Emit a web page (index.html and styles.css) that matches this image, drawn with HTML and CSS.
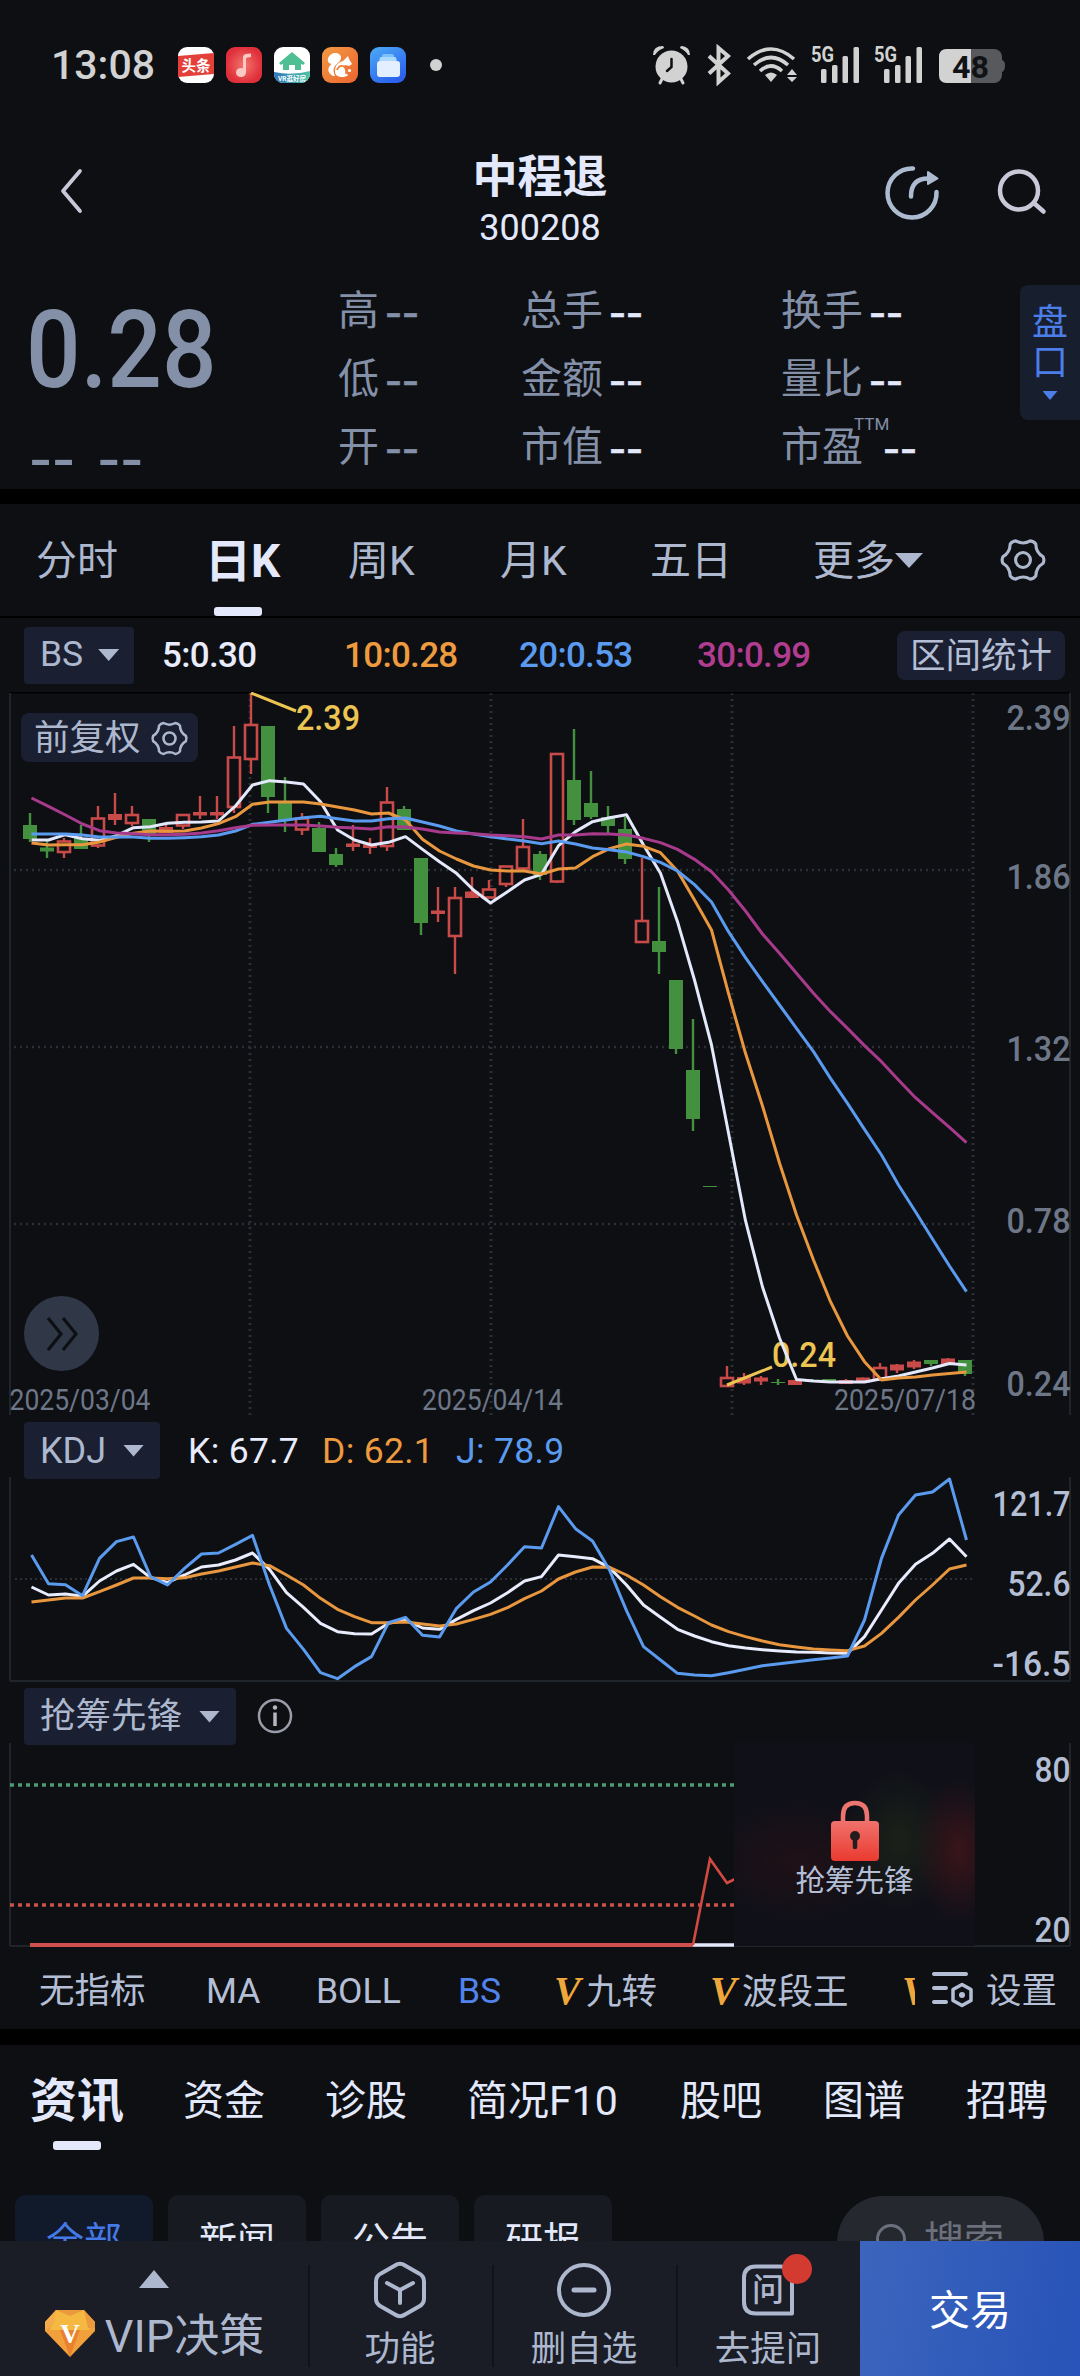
FILE: index.html
```html
<!DOCTYPE html>
<html lang="zh-CN">
<head>
<meta charset="utf-8">
<title>中程退 300208</title>
<link rel="stylesheet" href="styles.css">
</head>
<body>
<svg class="defs" width="0" height="0">
  <symbol id="gear" viewBox="-20 -20 40 40"><path d="M16.8-2.7Q18 0 16.8 2.7Q10.8 6.3 10.7 13.2Q9 15.6 6.1 15.9Q0 12.5-6.1 15.9Q-9 15.6-10.7 13.2Q-10.8 6.3-16.8 2.7Q-18 0-16.8-2.7Q-10.8-6.3-10.7-13.2Q-9-15.6-6.1-15.9Q0-12.5 6.1-15.9Q9-15.6 10.7-13.2Q10.8-6.3 16.8-2.7Z"/><circle r="6.2"/></symbol>
  <symbol id="bars" viewBox="0 0 50 40"><rect x="11" y="23" width="5.5" height="14" rx="1.5"/><rect x="22" y="19" width="5.5" height="18" rx="1.5"/><rect x="32.500" y="10" width="5.500" height="27" rx="1.500"/><rect x="43.500" y="1" width="5.500" height="36" rx="1.500"/></symbol>
</svg>
<div class="page">
  <div class="status">
    <span class="clock">13:08</span>
    <div class="apps">
      <svg width="36" height="36" viewBox="0 0 36 36"><rect width="36" height="36" rx="9" fill="#fff"/><path d="M0 9L36 6V27L0 30Z" fill="#e4403a"/><text x="18" y="23.500" text-anchor="middle" font-size="14.500" class="badge-text">头条</text></svg>
      <svg width="36" height="36" viewBox="0 0 36 36"><defs><radialGradient id="ga"><stop offset="0" stop-color="#f4756c"/><stop offset="1" stop-color="#df2f3b"/></radialGradient></defs><rect width="36" height="36" rx="9" fill="url(#ga)"/><ellipse cx="15" cy="25.500" rx="5" ry="4.500" fill="#fbc9c3"/><path d="M17 26V9.500Q17.500 7 20 7L25 6.500V10L20 11V26Z" fill="#fbc9c3"/></svg>
      <svg width="36" height="36" viewBox="0 0 36 36"><defs><clipPath id="ca"><rect width="36" height="36" rx="9"/></clipPath><linearGradient id="gb"><stop offset="0" stop-color="#3078bd"/><stop offset="1" stop-color="#4ec3a4"/></linearGradient></defs><g clip-path="url(#ca)"><rect width="36" height="36" fill="#fff"/><path d="M18 5L31 16L29 18L27 16.500V23H21V18H15V23H9V16.500L7 18L5 16Z" fill="#4dbf92"/><path d="M0 25Q18 29 36 24V36H0Z" fill="url(#gb)"/><text x="18" y="33.500" text-anchor="middle" font-size="6.500" class="badge-text">VR逛好房</text></g></svg>
      <svg width="36" height="36" viewBox="0 0 36 36"><defs><linearGradient id="gc" x2="1" y2="1"><stop offset="0" stop-color="#f29a43"/><stop offset="1" stop-color="#ec6430"/></linearGradient></defs><rect width="36" height="36" rx="9" fill="url(#gc)"/><path d="M11 29C4 25 6 20 9.500 17C3.500 16 5 8 12 6C19 5 21 11 17 15C12 19 10 22 13 29Z" fill="#fff"/><path d="M13 24C13 17 18 15 21 14L26 9L27 12L30 17L27 19L23 18C21 18 23 22 26 28.500L22 30C15 30 13 28 13 24Z" fill="#fff"/><path d="M15 23Q17 18 21 19Q25 21 24 27" fill="none" stroke="#ee7d38" stroke-width="1.800"/><circle cx="27.500" cy="23.500" r="1.600" fill="#fff"/></svg>
      <svg width="36" height="36" viewBox="0 0 36 36"><defs><linearGradient id="gd" x2=".6" y2="1"><stop offset="0" stop-color="#4dabf5"/><stop offset="1" stop-color="#2c62ee"/></linearGradient></defs><rect width="36" height="36" rx="9" fill="url(#gd)"/><rect x="12" y="7" width="12" height="5" rx="2" fill="#78c1fa"/><rect x="9.500" y="10" width="17" height="6" rx="2" fill="#abd8fd"/><rect x="7" y="14" width="23" height="16" rx="3" fill="#e3efff"/></svg>
    </div>
    <i class="dot"></i>
    <svg class="sys" width="356" height="42" viewBox="650 44 356 42">
      <g fill="#d2d2d2" stroke="#d2d2d2" stroke-linecap="round">
        <circle cx="671.500" cy="66.500" r="16" stroke="none"/><path d="M653 55Q653 46 663 46Q664 47 664 48Q658 50 655 55ZM680 48Q680 46 682 46Q690 47 690 55H688Q686 51 680 48Z" stroke="none"/><path d="M662 79L660 83M681 79L683 83" stroke-width="3"/>
        <path d="M671.500 59V67L667 71" stroke="#0d0f13" stroke-width="2.500" fill="none"/>
        <path d="M709 56L728 73.500L718.500 82V48L728 56L709 73.500" fill="none" stroke-width="4" stroke-linecap="butt"/>
        <path d="M748 59Q771 39 794 59M754 65Q771 50 788 65M760 71Q771 61 782 71" fill="none" stroke-width="3.600" stroke-linecap="butt"/><path d="M765 75Q771 70 777 75L771 82Z" stroke="none"/>
        <path d="M792 69L797 75H787ZM792 82L797 77H787Z" stroke="none"/>
      </g>
      <use href="#bars" x="810" y="46" width="50" height="40" fill="#d2d2d2"/><use href="#bars" x="873" y="46" width="50" height="40" fill="#d2d2d2"/>
      <text x="811" y="61.500" class="net" textLength="23" lengthAdjust="spacingAndGlyphs">5G</text><text x="874" y="61.500" class="net" textLength="23" lengthAdjust="spacingAndGlyphs">5G</text>
      <path d="M1000 60H1002Q1005 61 1005 65Q1005 71 1002 72H1000Z" fill="#58595c"/><rect x="939" y="49" width="63" height="34" rx="8" fill="#58595c"/><path d="M971 49H947Q939 49 939 57V75Q939 83 947 83H971Z" fill="#d2d2d2"/><text x="952" y="77.500" class="batt" textLength="37" lengthAdjust="spacingAndGlyphs">48</text>
    </svg>
  </div>

  <div class="titlebar">
    <svg class="back" width="24" height="46" viewBox="0 0 24 46"><path d="M21 3L4 23L21 43" fill="none" stroke="#c9c7d8" stroke-width="3.800" stroke-linecap="round" stroke-linejoin="round"/></svg>
    <div class="stock"><b>中程退</b><span>300208</span></div>
    <div class="tools">
      <svg width="60" height="60" viewBox="-30 -30 60 60"><g fill="none" stroke="#adbbd1" stroke-width="4.500" stroke-linecap="round"><path d="M1-24.500A24.500 24.500 0 1 0 24.500-1"/><path d="M-1 3.500C-1-9 5-14.500 16-14.500"/></g><path d="M16-21L25.500-14.500L16-9Z" fill="#adbbd1" stroke="#adbbd1" stroke-width="2" stroke-linejoin="round"/></svg>
      <svg width="60" height="60" viewBox="-30 -30 60 60"><g fill="none" stroke="#c9c7d8" stroke-width="4.500" stroke-linecap="round"><circle cx="-1" cy="-2.500" r="19"/><path d="M15 11L23.500 18.500"/></g></svg>
    </div>
  </div>

  <div class="quote">
    <div class="price"><span class="last">0.28</span><span class="change"><i>--</i><i>--</i></span></div>
    <dl class="facts">
      <div class="dim"><dt>高</dt><dd>--</dd></div><div><dt>总手</dt><dd>--</dd></div><div><dt>换手</dt><dd>--</dd></div>
      <div class="dim"><dt>低</dt><dd>--</dd></div><div><dt>金额</dt><dd>--</dd></div><div><dt>量比</dt><dd>--</dd></div>
      <div class="dim"><dt>开</dt><dd>--</dd></div><div><dt>市值</dt><dd>--</dd></div><div><dt class="ttm">市盈<sup>TTM</sup></dt><dd>--</dd></div>
    </dl>
    <div class="side"><span>盘</span><span>口</span><i class="tri"></i></div>
  </div>

  <div class="band"></div>

  <nav class="period">
    <span>分时</span><span class="on">日K</span><span>周K</span><span>月K</span><span>五日</span><span>更多<i class="tri"></i></span>
    <svg width="48" height="48"><use href="#gear"/></svg>
  </nav>

  <div class="legend">
    <span class="pill">BS<i class="tri"></i></span>
    <span class="ma c5">5:0.30</span><span class="ma c10">10:0.28</span><span class="ma c20">20:0.53</span><span class="ma c30">30:0.99</span>
    <span class="range">区间统计</span>
  </div>

  <div class="chart main">
    <svg id="kline" width="1080" height="723" viewBox="0 692 1080 723"></svg>
    <span class="adjust">前复权<svg width="39" height="39"><use href="#gear"/></svg></span>
    <span class="expand"><svg width="36" height="36" viewBox="0 0 36 36"><path d="M4 2L17 18L4 34M19 2L32 18L19 34" fill="none" stroke="#0d0f13" stroke-width="3.200"/></svg></span>
  </div>

  <div class="subhead"><span class="pill">KDJ<i class="tri"></i></span><span class="k c5">K: 67.7</span><span class="k c10">D: 62.1</span><span class="k c20">J: 78.9</span></div>
  <div class="chart"><svg id="kdj" width="1080" height="205" viewBox="0 1477 1080 205"></svg></div>

  <div class="subhead second"><span class="pill">抢筹先锋<i class="tri"></i></span>
    <svg class="info" width="38" height="38" viewBox="-19 -19 38 38"><circle r="16" fill="none" stroke="#9a9ca8" stroke-width="2.500"/><circle cy="-8.500" r="2.200" fill="#b4b6c2"/><path d="M0-3.500V10" stroke="#b4b6c2" stroke-width="3.500"/></svg>
  </div>
  <div class="chart third">
    <svg id="chips" width="1080" height="204" viewBox="0 1743 1080 204"></svg>
    <div class="lock">
      <svg width="50" height="62" viewBox="0 0 50 62"><defs><linearGradient id="gl" x2="0" y2="1"><stop offset="0" stop-color="#f0726c"/><stop offset="1" stop-color="#ea3a30"/></linearGradient></defs><path d="M13 24V16Q13 3 25 3Q37 3 37 16V24" fill="none" stroke="#ed746f" stroke-width="4.500"/><rect x="1" y="21" width="48" height="40" rx="4" fill="url(#gl)"/><circle cx="25" cy="36" r="5" fill="#241d20"/><path d="M25 37V47" stroke="#241d20" stroke-width="4.500" stroke-linecap="round"/></svg>
      <span>抢筹先锋</span>
    </div>
  </div>

  <div class="indicators">
    <span>无指标</span><span>MA</span><span>BOLL</span><span class="on">BS</span><span><b>V</b>九转</span><span><b>V</b>波段王</span><span class="cut"><b>V</b></span>
    <svg width="44" height="42" viewBox="0 0 44 42"><g fill="none" stroke="#b4bfd6" stroke-width="4" stroke-linecap="round"><path d="M3 4H35M3 18H15M3 32H15"/><path stroke-width="3.500" d="M31 14.500L40 19.500V30.500L31 35.500L22 30.500V19.500Z" stroke-linejoin="round"/></g><circle cx="31" cy="25" r="3" fill="#b4bfd6"/></svg>
    <span>设置</span>
  </div>

  <div class="band last-band"></div>

  <nav class="news"><span class="on">资讯</span><span>资金</span><span>诊股</span><span>简况F10</span><span>股吧</span><span>图谱</span><span>招聘</span></nav>

  <div class="filters">
    <span class="chip on">全部</span><span class="chip">新闻</span><span class="chip">公告</span><span class="chip">研报</span>
    <span class="search"><svg width="34" height="38" viewBox="0 0 34 38"><circle cx="16" cy="16" r="13.500" fill="none" stroke="#6a707c" stroke-width="3"/><path d="M25 26L32 34" stroke="#6a707c" stroke-width="3"/></svg>搜索</span>
  </div>

  <div class="bottom">
    <div class="vip">
      <i class="up"></i>
      <div><svg width="52" height="48" viewBox="0 0 52 48"><path d="M12 0H40L51 12V21L26 47L1 21V12Z" fill="#f2a03c"/><path d="M12 0H40L46 20H6Z" fill="#f5b942"/><path d="M12 0L26 6L40 0L44 18H51V12L40 0Z" fill="#ea9a3c"/><path d="M12 0L1 12V20L10 14Z" fill="#f4ac4a"/><path d="M16 20L26 47L36 20Z" fill="#e8822f"/><text x="26" y="33" text-anchor="middle" class="gem">V</text></svg><span>VIP决策</span></div>
    </div>
    <div class="act"><svg width="60" height="60" viewBox="-30 -30 60 60"><path d="M-5-24.500Q0-28 5-24.500L19-16.500Q24-14 24-8.500V8.500Q24 14 19 16.500L5 24.500Q0 28-5 24.500L-19 16.500Q-24 14-24 8.500V-8.500Q-24-14-19-16.500Z"/><path d="M-13-7L0 0L13-7M0 0V13"/></svg><span>功能</span></div>
    <div class="act"><svg width="60" height="60" viewBox="-30 -30 60 60"><circle r="25"/><path d="M-10 0H10" stroke-width="5"/></svg><span>删自选</span></div>
    <div class="act ask"><svg width="60" height="60" viewBox="-30 -30 60 60"><path d="M24 23.500H-12Q-24 23.500-24 12V-12Q-24-23.500-12-23.500H12Q24-23.500 24-12Z"/><text y="11" text-anchor="middle">问</text></svg><i class="red"></i><span>去提问</span></div>
    <div class="trade">交易</div>
  </div>
</div>
<script src="charts.js"></script>
</body>
</html>
```
FILE: styles.css
```css
* { box-sizing: border-box; }
body { margin: 0; background: #0d0f13; font-family: Roboto, "Noto Sans CJK SC", sans-serif; line-height: 1; color: #adb8cf; }
i { font-style: normal; }
svg { display: block; flex: none; }
.defs { position: absolute; }
span { white-space: nowrap; }
.page { width: 1080px; height: 2376px; overflow: hidden; display: flex; flex-direction: column; }
.page > * { flex: none; }
.badge-text { font-weight: 700; fill: #fff; }
.tri { display: inline-block; width: 21px; height: 12px; background: currentColor; clip-path: polygon(0 0, 100% 0, 50% 100%); }

/* status bar */
.status { height: 100px; padding: 30px 0 0 51px; display: flex; align-items: center; }
.clock { width: 127px; font-size: 41px; font-weight: 500; color: #d2d2d2; }
.apps { display: flex; gap: 12px; }
.dot { width: 12px; height: 12px; border-radius: 50%; background: #d2d2d2; margin-left: 24px; }
.sys { margin-left: 208px; }
.net { font-size: 22px; font-weight: 700; fill: #d2d2d2; }
.batt { font-size: 32px; font-weight: 700; fill: #101216; }

/* title */
.titlebar { height: 160px; display: grid; grid-template-columns: 300px 1fr 300px; }
.back { margin: 68px 0 0 59px; }
.stock { display: flex; flex-direction: column; align-items: center; color: #e3e8fb; padding-top: 55px; }
.stock b { font-size: 45px; height: 55px; }
.stock span { font-size: 36px; }
.tools { display: flex; gap: 48px; padding: 63px 0 0 102px; }

/* quote */
.quote { height: 229px; display: grid; grid-template-columns: 338px 682px 60px; color: #8390a8; }
.price { padding: 36px 0 0 26px; display: flex; flex-direction: column; }
.last { font-size: 108px; font-weight: 500; transform: scaleX(.89); transform-origin: 0 0; height: 130px; }
.change { display: flex; gap: 22px; padding-left: 3px; font: 64px/1 "DejaVu Sans"; }
.facts { margin: 0; display: grid; grid-template-columns: 183px 260px 239px; grid-auto-rows: 68px; padding-top: 17px; }
.facts div { display: flex; align-items: center; }
.facts dt { font-size: 41px; }
.facts dd { margin: 0 0 0 6px; font: 47px/1 "DejaVu Sans"; color: #e3e8fb; -webkit-text-stroke: .5px currentColor; }
.facts .dim dd { color: #8390a8; }
.ttm { position: relative; margin-right: 14px; }
.ttm sup { position: absolute; left: 73px; top: -11px; font-size: 17px; line-height: 1; }
.side { margin-top: 25px; height: 135px; background: #171e2e; border-radius: 8px 0 0 8px; color: #4c7ee9; display: flex; flex-direction: column; align-items: center; padding: 20px 0 0 0; font-size: 36px; gap: 4px; }
.side .tri { width: 15px; height: 9px; margin-top: 6px; }

.band { height: 15px; background: #000; }
.last-band { height: 16px; }

/* period tabs */
.period { height: 114px; border-bottom: 2px solid #000; display: grid; grid-template-columns: 169px 143px 152px 150px 163px 186px 48px; padding: 0 0 0 36px; align-items: center; font-size: 41px; }
.period span { height: 112px; line-height: 114px; }
.period .on { position: relative; font-size: 46px; font-weight: 700; color: #e3e8fb; }
.period .on::after { content: ""; position: absolute; left: 9px; bottom: 0; width: 48px; height: 9px; background: #e3e8fb; border-radius: 3px; }
.period .tri { width: 28px; height: 15px; margin-bottom: 7px; }
.period svg, .adjust svg { fill: none; stroke: #adb8cf; stroke-width: 2.600; }

/* moving-average legend */
.legend { height: 74px; display: grid; grid-template-columns: 138px 182px 175px 178px 200px 168px; padding-left: 24px; align-items: center; }
.pill { justify-self: start; height: 57px; padding: 0 15px 0 16px; background: #1a2031; border-radius: 4px; display: flex; align-items: center; gap: 15px; font-size: 35.500px; }
.subhead .pill { font-size: 36px; gap: 17px; padding-right: 16px; }
.subhead.second .pill { font-size: 35.500px; }
.ma { font-size: 35px; letter-spacing: -.7px; font-weight: 500; }
.c5 { color: #e8ecfc; } .c10 { color: #ee9a3f; } .c20 { color: #5a9bef; } .c30 { color: #b13c90; }
.range { height: 49px; line-height: 50px; border-radius: 8px; background: #1a2031; font-size: 35.500px; text-align: center; color: #b4bfd6; }

/* charts */
.chart { position: relative; }
.chart svg text { font-size: 35px; fill: #b4bfd6; }
.adjust { position: absolute; left: 21px; top: 21px; width: 177px; height: 49px; padding: 2px 0 0 13px; border-radius: 8px; background: #1a2031; display: flex; align-items: center; gap: 9px; font-size: 35.500px; }
.expand { position: absolute; left: 24px; top: 604px; width: 75px; height: 75px; border-radius: 50%; background: #303848; display: grid; place-items: center; }
.subhead { height: 62px; padding: 7px 0 0 24px; display: flex; align-items: flex-start; position: relative; z-index: 1; }
.subhead.second { height: 61px; padding-top: 6px; }
.subhead .k { font-size: 35.500px; line-height: 58px; width: 134px; letter-spacing: .3px; }
.subhead .pill + .k { margin-left: 28px; }
.info { margin: 9px 0 0 20px; }
.lock { position: absolute; left: 734px; top: 0; width: 241px; height: 203px; background: radial-gradient(ellipse 44px 75px at 225px 108px, #39151a, transparent), radial-gradient(ellipse 55px 75px at 165px 98px, #1b2119, transparent), radial-gradient(ellipse 100px 65px at 65px 118px, #201117, transparent), #0f1018; display: flex; flex-direction: column; align-items: center; padding-top: 57px; gap: 5px; font-size: 29.500px; color: #b4bfd6; }

/* indicator switcher */
.indicators { height: 82px; display: grid; grid-template-columns: 167px 110px 142px 96px 156px 192px 29px 55px 1fr; padding: 7px 0 0 39px; align-items: center; font-size: 35.500px; color: #b4bfd6; }
.indicators .on { color: #5283ec; }
.indicators b { display: inline-block; width: 32px; font: italic 700 40px/35px "Liberation Serif"; color: #efa73c; }
.indicators .cut { width: 13px; overflow: hidden; }
.indicators svg { align-self: start; margin: 16px 0 0; }

/* news tabs */
.news { height: 150px; display: grid; grid-template-columns: 153px 142px 142px 213px 143px 143px 1fr; padding-left: 30px; align-items: start; font-size: 41px; color: #e3e8fb; }
.news span { line-height: 41px; margin-top: 36px; }
.news .on { position: relative; font-size: 47px; font-weight: 700; height: 80px; margin-top: 35px; }
.news .on::after { content: ""; position: absolute; left: 23px; bottom: 10px; width: 48px; height: 9px; background: #e3e8fb; border-radius: 3px; }
.filters { height: 46px; overflow: hidden; padding-left: 15px; display: flex; gap: 15px; font-size: 38px; color: #e3e8fb; }
.chip { width: 138px; height: 92px; line-height: 92px; border-radius: 10px; text-align: center; background: #171a21; }
.chip.on { background: #111a2b; color: #4679e8; }
.search { margin: 1px 36px 0 auto; width: 207px; height: 92px; border-radius: 46px; background: #25282f; color: #6a707c; font-size: 40px; display: flex; align-items: center; padding-left: 38px; gap: 15px; }

/* bottom bar */
.bottom { height: 135px; background: #1a1d26; display: grid; grid-template-columns: 308px 184px 184px 184px 220px; color: #adb8cf; }
.vip { display: flex; flex-direction: column; align-items: center; padding-top: 29px; gap: 22px; }
.vip .up { width: 30px; height: 18px; background: currentColor; clip-path: polygon(50% 0, 100% 100%, 0 100%); }
.vip div { display: flex; gap: 9px; font-size: 45px; }
.vip span { padding-top: 4px; }
.gem { font: 700 27px "Liberation Serif"; fill: #fff; }
.act { position: relative; display: flex; flex-direction: column; align-items: center; padding-top: 19px; gap: 12px; font-size: 35.500px; }
.act::before { content: ""; position: absolute; left: 0; top: 24px; width: 2px; height: 102px; background: #101319; }
.act svg { fill: none; stroke: currentColor; stroke-width: 4; stroke-linecap: round; stroke-linejoin: round; }
.act text { font-size: 32px; font-weight: 500; fill: currentColor; stroke: none; }
.ask .red { position: absolute; left: 106px; top: 13px; width: 30px; height: 30px; border-radius: 50%; background: #d43b30; }
.trade { background: linear-gradient(100deg, #3c65bd, #2853b8); color: #fff; font-size: 41px; padding-top: 5px; display: grid; place-items: center; }
```
FILE: charts.js
```js
const BG = '#0d0f13', RED = '#c94b49', GREEN = '#43913f';
const GRID = '#2b2e34', FRAME = '#20252b';
const cx = i => 30 + 17 * i;
const line = (x1, y1, x2, y2, c, w = 2, dash = '') =>
  `<line x1="${x1}" y1="${y1}" x2="${x2}" y2="${y2}" stroke="${c}" stroke-width="${w}" stroke-dasharray="${dash}"/>`;
const rect = (x, y, w, h, fill, extra = '') =>
  `<rect x="${x}" y="${y}" width="${w}" height="${h}" fill="${fill}" ${extra}/>`;
const series = (ys, c) =>
  `<polyline points="${ys.map((y, i) => `${cx(i) + 1.5},${y}`).join(' ')}" fill="none" stroke="${c}" stroke-width="3" stroke-linejoin="round"/>`;
const label = (x, y, s, w, fill = '#6e7788', size = 35, weight = 500) =>
  `<text x="${x - w}" y="${y}" textLength="${w}" lengthAdjust="spacingAndGlyphs" style="fill:${fill};font-size:${size}px;font-weight:${weight}">${s}</text>`;

// type (g = down, r = hollow up, f = flat up), high, body top, body bottom, low
const candles = [
  ['g',813,825,839,842],['g',840,847.5,851.5,858],['r',838,841,852.5,858],['g',825,838,849,849],['r',806,818,846,848],
  ['f',793,814,820,825],['r',806,814.5,823.5,826],['g',819,819,834,842],['f',824,827,833,833],['r',814.5,814.5,826,829],
  ['f',796,812,815.5,819],['f',796,812,815.5,819],['r',726,757,807.5,813],['r',693,724.5,759.5,774],['g',726,726,797,813],
  ['g',777,803,820,832],['r',813,818,830,835],['g',822,828,852,852],['g',848,854,865,867],['f',825,843.5,847,851],
  ['f',838,844.5,848,854],['r',787,802,846.5,851],['g',806,809,830,830],['g',858,858,923,935],['f',887,910.5,914,922],
  ['r',887,897.5,936.5,974],['f',877,891.5,898,898],['r',880,889,898,898],['r',866,866,884.5,887],['r',819,846.5,869,870],
  ['g',851,854,875,880],['r',753,753.500,882,883],['g',729,780,820,825],['g',771,803,817,819],['g',806,817,826,833],
  ['g',817,829,859,864],['r',858,920.5,942.5,942.5],['g',887,941,952,974],['g',980,980,1049,1054],['g',1019,1070,1119,1131],
  ['g',1186,1186,1187,1187],['r',1366,1377.5,1386.5,1386.5],['f',1373,1377,1383.5,1385],['f',1376,1377.5,1381.5,1385],
  ['g',1379,1382,1383,1385],['f',1380,1380,1385,1385],['g',1379,1380,1382,1382],['g',1379,1379,1382,1382],
  ['f',1379,1380,1384,1384],['f',1377.5,1377.5,1382.5,1382.5],['r',1363,1367.5,1380,1380],['f',1364,1364.5,1370.5,1373],
  ['f',1360,1361.5,1367.5,1369],['g',1360,1360,1364,1366],['f',1358,1358.5,1365,1365],['g',1360,1360,1374,1376]
];
const from680 = a => a.map(v => 680 + v / 3);
const ma5 = from680([480,480,464,476,481,467,443,440,430,427,426,423,378,315,302,306,312,365,450,480,495,487,470,508,545,580,630,669,635,600,583,497,455,425,413,404,495,580,725,900,1095])
  .concat([1133,1220.7,1287,1338,1379.5,1381,1382,1382,1382,1378.7,1376,1372,1368,1363.5,1365]);
const ma10 = from680([489,495,494,494,486,472,460,453,454,453,444,431,410,373,366,366,366,372,381,390,402,399,420,478,513,537,558,570,573,573,582,567,564,530,506,492,499,518,573,660,750,940,1120,1278])
  .concat([1163,1215,1260,1301.7,1336,1361.7,1380,1378,1377,1375,1373.5,1372]);
const ma20 = from680([462,462,462,465,471,471,471,475,475,473,470,465,453,433,427,420,413,409,416,423,423,416,414,426,438,453,462,470,477,483,491,483,492,504,509,516,530,547,573,614,666,755,833,905,975,1045,1115,1195,1270,1348])
  .concat([1155,1185,1211.7,1239,1266,1291.7]);
const ma30 = from680([354,379,405,432,452,459,461,464,464,463,459,452,443,436,435,435,435,438,442,444,447,440,441,447,456,459,461,465,467,470,477,465,465,461,462,465,475,488,508,538,575,630,693,762,820,880,940,995,1045,1097,1145,1200,1253,1298,1342,1388]);

let k = '';
[250, 491, 732, 973].forEach(x => k += line(x, 693, x, 1415, GRID, 3, '2 4'));
[870, 1047, 1224].forEach(y => k += line(14, y, 973, y, GRID, 2.5, '2 4'));
k += line(9, 692, 1070, 692, '#000', 3) + line(10, 693, 10, 1415, FRAME) + line(1070, 693, 1070, 1415, FRAME);
candles.forEach(([t, hi, top, bot, lo], i) => {
  const x = cx(i), c = t === 'g' ? GREEN : RED;
  k += line(x, hi, x, lo, c, 2.4);
  k += t === 'r'
    ? rect(x - 6, top + 0.5, 12, bot - top - 1, BG, `stroke="${c}" stroke-width="2.6"`)
    : rect(x - 7, top, 14, bot - top, c);
});
k += label(150.5, 1410, '2025/03/04', 141, undefined, 29, 400) + label(563, 1410, '2025/04/14', 141, undefined, 29, 400) + label(976, 1410, '2025/07/18', 142, undefined, 29, 400);
k += line(251, 693, 296, 711, '#ecc452', 3) + line(727, 1385, 772, 1367, '#ecc452', 3);
k += label(360, 730, '2.39', 64, '#ecc452') + label(836, 1367, '0.24', 64, '#ecc452');
k += series(ma5, '#e3e8fb') + series(ma10, '#e8973e') + series(ma20, '#5a9bef') + series(ma30, '#a83a8c');
[['2.39', 730], ['1.86', 889], ['1.32', 1061], ['0.78', 1233], ['0.24', 1396]].forEach(([s, y]) => k += label(1070.5, y, s, 64));
document.getElementById('kline').innerHTML = k;

const from1280 = a => a.map(v => 1280 + v / 3);
const J = from1280([825,911,914,947,835,785,771,890,915,865,822,819,793,766,915,1045,1108,1178,1196,1160,1130,1028,1012,1066,1071,985,936,906,855,800,804,680,746,783,870,992,1100,1140,1180,1185,1187,1178,1168,1157,1151,1145,1139,1134,1128,1020,835,705,645,636,597,780]);
const K = from1280([921,945,942,949,903,873,853,893,907,885,861,855,840,819,868,938,982,1030,1055,1061,1062,1030,1020,1044,1048,1018,992,969,938,903,890,825,830,836,863,915,975,1012,1048,1068,1085,1097,1104,1109,1113,1116,1117,1119,1120,1070,990,910,853,820,777,830]);
const D = from1280([966,960,954,954,935,915,894,894,896,893,882,873,861,849,857,885,915,955,988,1010,1028,1028,1026,1032,1038,1032,1018,1003,983,956,933,897,876,861,862,885,915,950,982,1008,1035,1055,1070,1083,1094,1101,1107,1110,1112,1098,1060,1012,960,915,867,855]);
let d = line(10, 1477, 10, 1681, FRAME) + line(1070, 1477, 1070, 1681, FRAME) + line(10, 1681, 1070, 1681, FRAME);
d += line(15, 1579, 973, 1579, GRID, 2, '2 3');
d += series(K, '#e8ecfc') + series(D, '#e8973e') + series(J, '#5a9bef');
d += label(1070.5, 1516, '121.7', 78, '#b4bfd6') + label(1070.5, 1596, '52.6', 63, '#b4bfd6') + label(1070.5, 1676, '-16.5', 78, '#b4bfd6');
document.getElementById('kdj').innerHTML = d;

let c = line(10, 1743, 10, 1946, FRAME) + line(1070, 1743, 1070, 1946, FRAME) + line(10, 1946, 1070, 1946, FRAME);
c += line(10, 1785, 734, 1785, '#4b9c74', 3.5, '4 4') + line(10, 1905, 734, 1905, '#cc514c', 3.5, '4 4');
c += line(30, 1945, 693, 1945, '#cf504c', 4) + line(693, 1945, 734, 1945, '#e3e8fb', 3.5);
c += '<polyline points="693,1945 710,1859 727,1883 735,1879" fill="none" stroke="#d04a42" stroke-width="2.6"/>';
c += label(1070.5, 1782, '80', 36, '#b4bfd6') + label(1070.5, 1942, '20', 36, '#b4bfd6');
document.getElementById('chips').innerHTML = c;
```
